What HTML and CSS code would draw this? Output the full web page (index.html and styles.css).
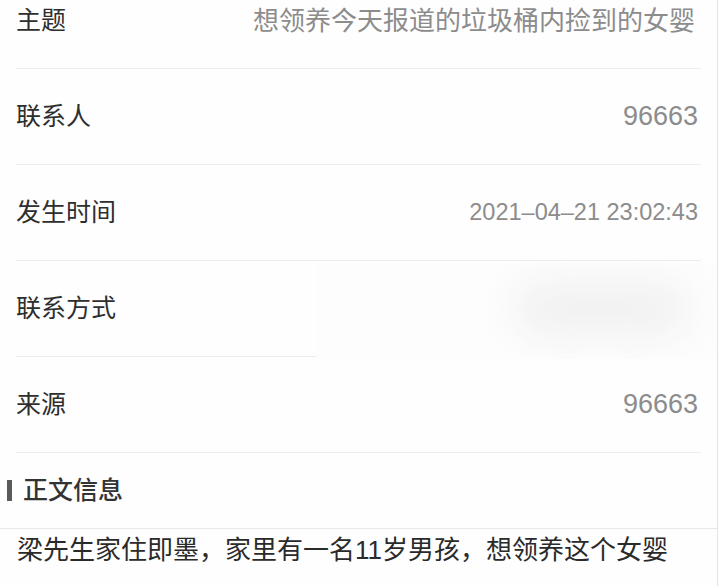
FILE: index.html
```html
<!DOCTYPE html>
<html lang="zh-CN">
<head>
<meta charset="utf-8">
<title>详情</title>
<link rel="stylesheet" href="styles.css">
</head>
<body>
<div class="page">
  <div class="list">
    <div class="row">
      <span class="label">主题</span>
      <span class="value value-cjk">想领养今天报道的垃圾桶内捡到的女婴</span>
    </div>
    <div class="row">
      <span class="label">联系人</span>
      <span class="value value-num">96663</span>
    </div>
    <div class="row">
      <span class="label">发生时间</span>
      <span class="value value-date">2021–04–21 23:02:43</span>
    </div>
    <div class="row row-masked">
      <span class="label">联系方式</span>
      <span class="mask"><span class="smudge"></span></span>
    </div>
    <div class="row">
      <span class="label">来源</span>
      <span class="value value-num">96663</span>
    </div>
  </div>
  <div class="section-title">
    <span class="bar"></span>
    <span class="title-text">正文信息</span>
  </div>
  <p class="content">梁先生家住即墨，家里有一名11岁男孩，想领养这个女婴</p>
</div>
</body>
</html>
```

FILE: styles.css
```css
html, body {
  margin: 0;
  padding: 0;
  background: #ffffff;
  overflow: hidden;
}

body {
  width: 722px;
  height: 586px;
  font-family: "Liberation Sans", "Noto Sans CJK SC", sans-serif;
}

.page {
  width: 717px;
  height: 586px;
  border-right: 1px solid #e4e4e4;
  background: #fefefe;
  overflow: hidden;
}

.list {
  margin-top: -27px;
}

.row {
  position: relative;
  display: flex;
  justify-content: space-between;
  align-items: center;
  height: 95px;
  margin: 0 16px 0 16px;
  border-bottom: 1px solid #ececec;
}

.label {
  font-size: 25px;
  color: #2e2e2e;
  line-height: 1;
}

.value {
  color: #8c8c8c;
  line-height: 1;
  padding-right: 3px;
}

.value-cjk {
  font-size: 26px;
  padding-right: 6px;
}

.value-num {
  font-size: 27px;
}

.value-date {
  font-size: 23.5px;
}

.row-masked {
  border-bottom-color: transparent;
}

.row-masked::after {
  content: "";
  position: absolute;
  left: 0;
  bottom: -1px;
  width: 300px;
  height: 1px;
  background: #ececec;
}

.mask {
  position: absolute;
  left: 300px;
  right: -16px;
  top: 2px;
  bottom: -3px;
  background: #fdfdfd;
  overflow: hidden;
}

.smudge {
  position: absolute;
  left: 200px;
  top: 18px;
  width: 170px;
  height: 56px;
  background: #f1f1f1;
  border-radius: 24px;
  filter: blur(18px);
}

.section-title {
  display: flex;
  align-items: center;
  height: 75px;
  padding-left: 7px;
  border-bottom: 1px solid #e8e8e8;
}

.bar {
  width: 5px;
  height: 21px;
  background: #5a5a5a;
  margin-right: 11px;
}

.title-text {
  font-size: 25px;
  font-weight: 500;
  color: #333333;
  line-height: 1;
}

.content {
  margin: 0;
  padding-left: 17px;
  font-size: 26px;
  line-height: 42px;
  color: #2a2a2a;
}
```
